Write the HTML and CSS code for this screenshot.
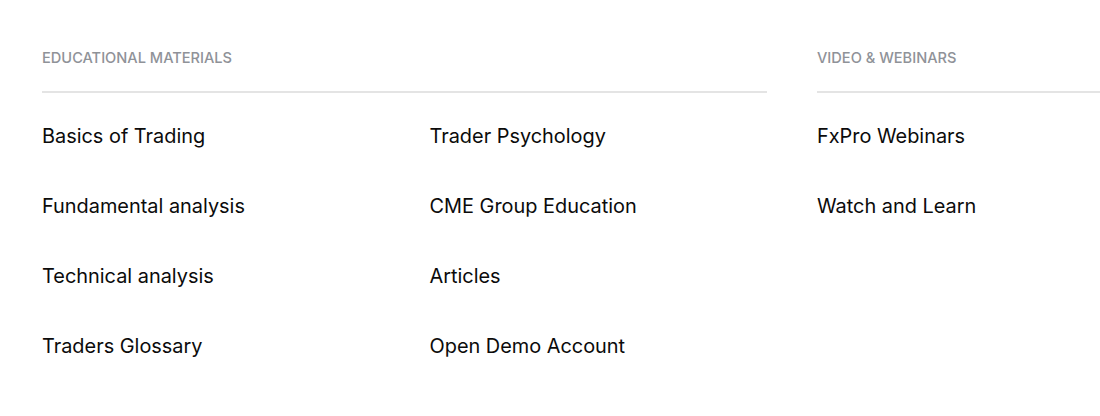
FILE: index.html
```html
<!DOCTYPE html>
<html lang="en">
<head>
<meta charset="utf-8">
<title>Education menu</title>
<link rel="stylesheet" href="styles.css">
</head>
<body>
<nav class="menu">
  <section class="group group-wide">
    <h3 class="group-title">Educational Materials</h3>
    <ul class="links links-two">
      <li><a href="#">Basics of Trading</a></li>
      <li><a href="#">Fundamental analysis</a></li>
      <li><a href="#">Technical analysis</a></li>
      <li><a href="#">Traders Glossary</a></li>
      <li><a href="#">Trader Psychology</a></li>
      <li><a href="#">CME Group Education</a></li>
      <li><a href="#">Articles</a></li>
      <li><a href="#">Open Demo Account</a></li>
    </ul>
  </section>
  <section class="group">
    <h3 class="group-title">Video &amp; Webinars</h3>
    <ul class="links">
      <li><a href="#">FxPro Webinars</a></li>
      <li><a href="#">Watch and Learn</a></li>
    </ul>
  </section>
</nav>
</body>
</html>
```

FILE: styles.css
```css
html, body {
  margin: 0;
  padding: 0;
  background: #ffffff;
  overflow: hidden;
}

body {
  font-family: Inter, "Liberation Sans", sans-serif;
  color: #000000;
}

.menu {
  display: grid;
  grid-template-columns: 725px 337.5px;
  column-gap: 50px;
  padding: 48px 0 0 42px;
  width: max-content;
}

.group-title {
  margin: 0;
  font-size: 14.6px;
  line-height: 20px;
  font-weight: 500;
  text-transform: uppercase;
  color: #8f9298;
  padding-bottom: 23px;
  border-bottom: 2px solid #e4e4e4;
}

.links {
  list-style: none;
  margin: 28px 0 0;
  padding: 0;
  display: grid;
  row-gap: 40px;
}

.links-two {
  grid-template-columns: 337.5px 337.5px;
  grid-template-rows: repeat(4, 30px);
  grid-auto-flow: column;
  column-gap: 50px;
}

.links li {
  font-size: 19.9px;
  line-height: 30px;
}

.links a {
  color: #0b0b0b;
  text-decoration: none;
}
```
